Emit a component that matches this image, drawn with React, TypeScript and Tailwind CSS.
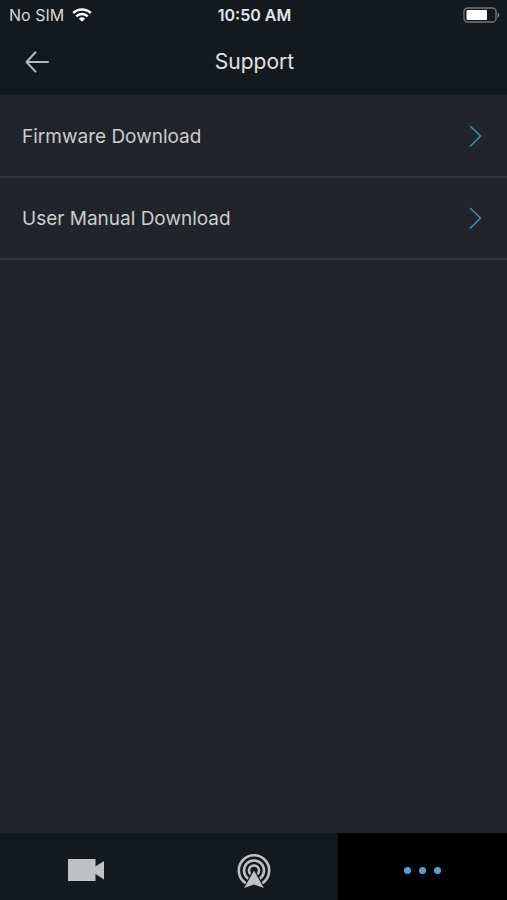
const links = ["Firmware Download", "User Manual Download"];

function StatusBar() {
  return (
    <div className="grid h-[30px] grid-cols-3 items-center pr-[7px] pl-[9px] text-base leading-5 text-[#d6d8d9]">
      <div className="flex items-center gap-2">
        <span>No SIM</span>
        <svg width="20" height="14" viewBox="0 0 20 14" aria-label="Wi-Fi" className="text-white">
          <g fill="none" stroke="currentColor" strokeWidth="2.5">
            <path d="M1.2 5A12.6 12.6 0 0 1 18.8 5" />
            <path d="M4.3 8.3A8.2 8.2 0 0 1 15.7 8.3" />
          </g>
          <path d="M6.9 10.7A4.6 4.6 0 0 1 13.1 10.7L10 13.8Z" fill="currentColor" />
        </svg>
      </div>
      <span className="text-center font-semibold whitespace-nowrap text-[#e4e6e7]">10:50 AM</span>
      <svg width="37" height="16" viewBox="0 0 37 16" aria-label="Battery" className="justify-self-end">
        <rect x="1" y="1" width="32" height="14" rx="3.5" fill="none" stroke="#74787a" strokeWidth="1.3" />
        <rect x="3.5" y="3" width="20.5" height="10" rx="1" fill="#fff" />
        <path d="M34.5 5.2C36.9 6 36.9 10 34.5 10.8Z" fill="#74787a" />
      </svg>
    </div>
  );
}

function Header() {
  return (
    <header className="h-24 border-b border-[#212429] bg-[#14191d]">
      <StatusBar />
      <div className="grid h-16 grid-cols-3 items-center pr-[22px] pl-6">
        <button type="button" aria-label="Back" className="justify-self-start text-[#b5b9bb]">
          <svg width="26" height="24" viewBox="0 0 26 24" fill="none" stroke="currentColor" strokeWidth="2" strokeLinecap="round" strokeLinejoin="round">
            <path d="M11.5 2.2 2.5 12l9 9.6M2.5 12H24" />
          </svg>
        </button>
        <h1 className="text-center text-[21px] leading-6 text-[#e1e3e4]">Support</h1>
      </div>
    </header>
  );
}

function TabBar() {
  return (
    <nav className="grid h-[67px] grid-cols-3 bg-[#14191d] text-[#bfc2c4]">
      <button type="button" aria-label="Cameras" className="flex items-center justify-center pt-2">
        <svg width="38" height="24" viewBox="0 0 38 24" fill="currentColor">
          <path d="M2 0H29.5V7.5L38 2V20.500L29.500 15V22H2Z" />
        </svg>
      </button>
      <button type="button" aria-label="Live" className="flex items-center justify-center pt-2">
        <svg width="36" height="36" viewBox="0 0 36 36">
          <g fill="none" stroke="currentColor" strokeWidth="2.6">
            <circle cx="18" cy="17.5" r="15.2" />
            <circle cx="18" cy="17.5" r="10" />
            <circle cx="18" cy="17.5" r="5" />
          </g>
          <path d="M18 17.500 28 36H8Z" fill="#14191d" stroke="#14191d" strokeWidth="2.5" />
          <path d="M18 17.500 27.8 35 18 31.500 8.200 35Z" fill="currentColor" />
        </svg>
      </button>
      <button type="button" aria-label="More" aria-current="page" className="flex items-center justify-center gap-2 bg-black pt-2">
        <span className="size-[7px] rounded-full bg-[#4ca1dc]" />
        <span className="size-[7px] rounded-full bg-[#4ca1dc]" />
        <span className="size-[7px] rounded-full bg-[#4ca1dc]" />
      </button>
    </nav>
  );
}

export default function App() {
  return (
    <div className="flex min-h-screen flex-col bg-[#212429] font-['Inter',sans-serif]">
      <Header />
      <main className="flex-1">
        <ul>
          {links.map((label) => (
            <li key={label} className="border-b-2 border-[#323438]">
              <a href="#" className="flex h-20 items-center justify-between pt-0.5 pr-[25px] pl-[22px] text-[19px] leading-6 text-[#cbcdce]">
                {label}
                <svg width="14" height="24" viewBox="0 0 14 24" fill="none" stroke="#388dbd" strokeWidth="1.6">
                  <path d="M2 1 12.5 11 2 21.5" />
                </svg>
              </a>
            </li>
          ))}
        </ul>
      </main>
      <TabBar />
    </div>
  );
}
